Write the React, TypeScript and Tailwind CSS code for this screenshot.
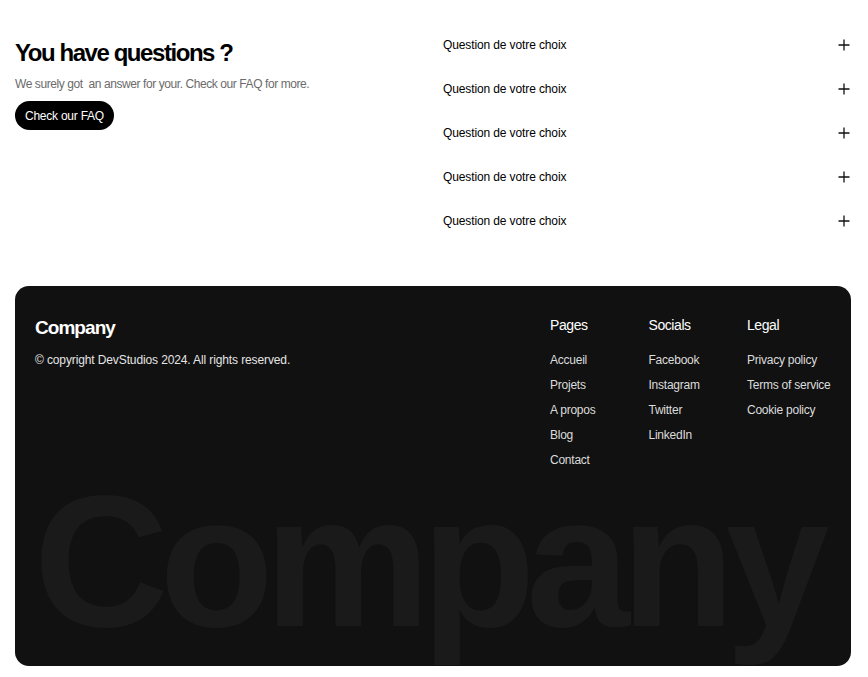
import React from 'react';

const questions = Array.from({ length: 5 }, () => 'Question de votre choix');

const footerCols = [
  { title: 'Pages', links: ['Accueil', 'Projets', 'A propos', 'Blog', 'Contact'] },
  { title: 'Socials', links: ['Facebook', 'Instagram', 'Twitter', 'LinkedIn'] },
  { title: 'Legal', links: ['Privacy policy', 'Terms of service', 'Cookie policy'] },
];

const PlusIcon = () => (
  <svg width="12" height="12" viewBox="0 0 12 12" fill="none" stroke="#111" strokeWidth="1.3">
    <path d="M6 0.5v11M0.5 6h11" />
  </svg>
);

export default function App() {
  return (
    <div className="min-h-[677px] bg-white pl-[15px] pr-[17px] pb-[11px] font-['Liberation_Sans',Arial,sans-serif] text-black">
      <section className="flex justify-between pt-[34px]">
        <div className="pt-[5px]">
          <h2 className="text-[24px] font-bold leading-[28px] tracking-[-0.06em]">You have questions ?</h2>
          <p className="mt-[9px] text-[12px] leading-4 tracking-[-0.035em] text-[#6b6b6b]">
            We surely got&nbsp; an answer for your. Check our FAQ for more.
          </p>
          <button className="mt-[9px] h-[29px] rounded-full bg-black px-[10px] text-[12px] tracking-[-0.02em] text-white">
            Check our FAQ
          </button>
        </div>

        <div className="flex w-[408px] flex-col">
          {questions.map((q, i) => (
            <div key={i} className="flex h-[44px] items-start justify-between pt-[4px]">
              <span className="text-[12px] leading-[14px] tracking-[-0.01em]">{q}</span>
              <span className="pt-[1px] pr-[1px]">
                <PlusIcon />
              </span>
            </div>
          ))}
        </div>
      </section>

      <footer className="mt-[32px] flex h-[380px] flex-col overflow-hidden rounded-[14px] bg-[#111111] text-white">
        <div className="flex justify-between pl-[20px] pr-[20px] pt-[30px]">
          <div>
            <div className="text-[19px] font-bold leading-6 tracking-[-0.05em]">Company</div>
            <p className="mt-[12px] text-[12px] leading-4 tracking-[-0.01em] text-[#e5e5e5]">
              © copyright DevStudios 2024. All rights reserved.
            </p>
          </div>
          <div className="flex pt-[1px]">
            {footerCols.map((col) => (
              <div key={col.title} className="w-[98.5px] last:w-[84px]">
                <h3 className="text-[14px] leading-4 tracking-[-0.03em]">{col.title}</h3>
                <ul className="mt-[19px] flex flex-col gap-[9px]">
                  {col.links.map((l) => (
                    <li key={l} className="whitespace-nowrap text-[12px] leading-4 tracking-[-0.02em] text-[#dcdcdc]">
                      {l}
                    </li>
                  ))}
                </ul>
              </div>
            ))}
          </div>
        </div>

        <div className="mt-auto mb-[29px] select-none pr-[12px] text-center text-[187px] font-bold leading-[0.8] tracking-[-0.05em] text-[#1a1a1a]">
          Company
        </div>
      </footer>
    </div>
  );
}
